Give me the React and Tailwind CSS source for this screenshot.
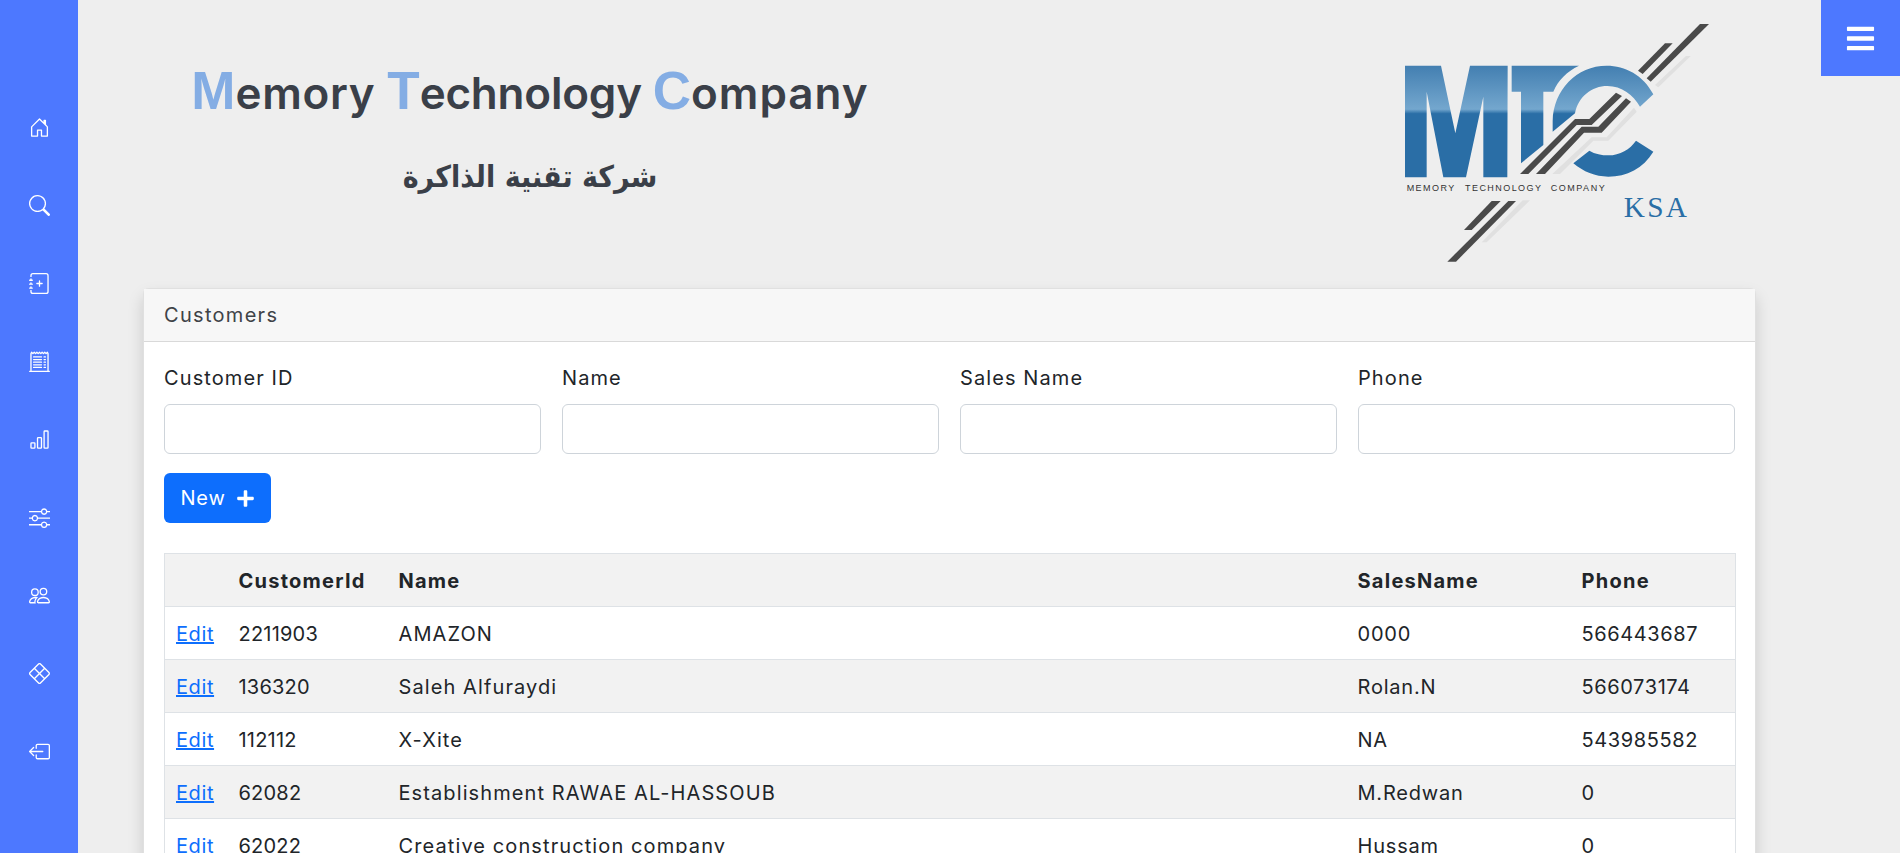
import React from "react";
import { BsHouseDoor, BsSearch, BsJournalPlus, BsReceiptCutoff, BsBarChart, BsSliders, BsPeople, BsXDiamond, BsBoxArrowLeft } from "react-icons/bs";
import { FaBars, FaPlus } from "react-icons/fa";

const icons = [BsHouseDoor, BsSearch, BsJournalPlus, BsReceiptCutoff, BsBarChart, BsSliders, BsPeople, BsXDiamond, BsBoxArrowLeft];
const filters = ["Customer ID", "Name", "Sales Name", "Phone"];
const rows = [
  ["2211903", "AMAZON", "0000", "566443687"],
  ["136320", "Saleh Alfuraydi", "Rolan.N", "566073174"],
  ["112112", "X-Xite", "NA", "543985582"],
  ["62082", "Establishment RAWAE AL-HASSOUB", "M.Redwan", "0"],
  ["62022", "Creative construction company", "Hussam", "0"],
];

function Logo() {
  return (
    <svg viewBox="0 0 1080 840" className="w-[360px] h-[280px] shrink-0">
      <defs>
        <linearGradient id="mtc" gradientUnits="userSpaceOnUse" x1="0" y1="197" x2="0" y2="532">
          <stop offset="0" stopColor="#437fb1" />
          <stop offset="0.39" stopColor="#74a7ce" />
          <stop offset="0.43" stopColor="#2a6ea6" />
          <stop offset="1" stopColor="#2a6ea6" />
        </linearGradient>
      </defs>
      <g fill="url(#mtc)">
        <path d="M75 197H183L226 400L270 197H383L382 532H310V290L258 532H190L140 275V532H75Z" />
        <path d="M395 197H597C560 215 535 240 520 275H490V435L423 490V275H395Z" />
        <path d="M820 283C790 225 735 197 680 197C590 197 520 270 518 363V395L585 340C595 290 635 258 682 258C725 258 760 285 780 320Z" />
        <path d="M580 490L628 452C645 462 665 466 685 466C720 466 750 448 768 422L820 455C790 505 740 530 685 530C645 530 610 515 580 490Z" />
      </g>
      <g fill="#e0e0e0">
        <path d="M918 168H932L835 262L825 255Z" />
        <path d="M517 522L635 412H680L762 323L770 335L685 422H640L540 522Z" />
        <path d="M428 601H450L320 727H305Z" />
      </g>
      <g fill="#4a4a4a">
        <path d="M960 72H987L812 245L800 235Z" />
        <path d="M855 130H878L788 222L774 212Z" />
        <path d="M420 522L585 357H628L708 278L726 288L635 375H590L445 522Z" />
        <path d="M468 522L605 380H655L738 295L753 305L665 398H612L495 522Z" />
        <path d="M335 603H362L275 690H252Z" />
        <path d="M385 603H408L228 785H202Z" />
      </g>
      <g fontFamily="Liberation Sans" fontSize="27" fill="#333">
        <text x="80" y="573" textLength="143" lengthAdjust="spacing">MEMORY</text>
        <text x="255" y="573" textLength="228" lengthAdjust="spacing">TECHNOLOGY</text>
        <text x="512" y="573" textLength="162" lengthAdjust="spacing">COMPANY</text>
      </g>
      <text x="731" y="650" fontFamily="Liberation Serif" fontSize="88" textLength="190" lengthAdjust="spacing" fill="#2a6ea6">KSA</text>
    </svg>
  );
}

export default function App() {
  return (
    <div className="relative flex h-[853px] overflow-hidden bg-[#eeeeee] text-[#212529] font-['Inter','Liberation_Sans',sans-serif]">
      <aside className="w-[78px] shrink-0 bg-[#4d78ff] pt-[117px] flex flex-col items-center text-white">
        {icons.map((Icon, i) => (
          <div key={i} className="h-[78px] w-full flex justify-center">
            <Icon size={21} />
          </div>
        ))}
      </aside>
      <main className="flex-1 min-w-0">
        <header className="h-[288px] flex justify-between pl-[113px] pr-[160px]">
          <div className="w-[678px] pt-[61px] text-center text-[#3a3f48]">
            <h1 className="text-[44px] leading-[60px] font-semibold whitespace-nowrap">
              <span className="text-[#84ade4] text-[53px] font-bold font-['Liberation_Sans']">M</span>
              <span className="tracking-[0.7px]">emory </span>
              <span className="text-[#84ade4] text-[53px] font-bold font-['Liberation_Sans']">T</span>
              <span className="tracking-[-0.2px]">echnology </span>
              <span className="text-[#84ade4] text-[53px] font-bold font-['Liberation_Sans']">C</span>
              <span className="tracking-[1px]">ompany</span>
            </h1>
            <p dir="rtl" className="mt-[32px] text-[30px] leading-[44px] font-bold font-['DejaVu_Sans_Condensed','DejaVu_Sans',sans-serif]">شركة تقنية الذاكرة</p>
          </div>
          <Logo />
        </header>
        <section className="ml-[65px] w-[1613px] bg-white rounded-md border border-[#e0e0e0] shadow-[0_8px_16px_rgba(0,0,0,0.15)]">
          <div className="h-[53px] flex items-center px-[20px] bg-[#f7f7f7] border-b border-[#d9d9d9] text-[20px] tracking-[1.3px] text-[#3f4348]">Customers</div>
          <div className="px-[20px] pt-[22px]">
            <div className="grid grid-cols-4 gap-x-[21px]">
              {filters.map((f) => (
                <label key={f} className="block">
                  <span className="block text-[20px] tracking-[1.1px] leading-[29px] mb-[11px]">{f}</span>
                  <input className="block w-full h-[50px] rounded-md border border-[#ced4da] bg-white" />
                </label>
              ))}
            </div>
            <button className="mt-[19px] h-[50px] w-[107px] flex items-center justify-center gap-[10px] rounded-md bg-[#0d6efd] text-white text-[20px] tracking-[0.8px]">
              New <FaPlus size={19} />
            </button>
            <table className="mt-[30px] w-[1571px] table-fixed border-collapse text-[20px] tracking-[0.6px]">
              <colgroup>
                <col className="w-[63px]" />
                <col className="w-[160px]" />
                <col className="w-[959px]" />
                <col className="w-[224px]" />
                <col className="w-[165px]" />
              </colgroup>
              <thead>
                <tr className="h-[53px] bg-[#f2f2f2] font-bold">
                  {["", "CustomerId", "Name", "SalesName", "Phone"].map((h, i) => (
                    <th key={i} className="border-y border-[#dee2e6] first:border-l last:border-r px-[11px] pt-[2px] text-left font-bold tracking-[1.25px]">{h}</th>
                  ))}
                </tr>
              </thead>
              <tbody>
                {rows.map((r, i) => (
                  <tr key={r[0]} className={`h-[53px] ${i % 2 ? "bg-[#f2f2f2]" : "bg-white"}`}>
                    <td className="border-y border-l border-[#dee2e6] px-[11px] pt-[2px]"><a href="#" className="text-[#0d6efd] underline">Edit</a></td>
                    <td className="border-y border-[#dee2e6] px-[11px] pt-[2px] tracking-[0.2px]">{r[0]}</td>
                    <td className="border-y border-[#dee2e6] px-[11px] pt-[2px] tracking-[1.1px]">{r[1]}</td>
                    <td className="border-y border-[#dee2e6] px-[11px] pt-[2px] tracking-[0.8px]">{r[2]}</td>
                    <td className="border-y border-r border-[#dee2e6] px-[11px] pt-[2px]">{r[3]}</td>
                  </tr>
                ))}
              </tbody>
            </table>
          </div>
        </section>
      </main>
      <button className="absolute top-0 right-0 w-[79px] h-[76px] bg-[#4d78ff] flex items-center justify-center text-white">
        <FaBars size={31} />
      </button>
    </div>
  );
}
